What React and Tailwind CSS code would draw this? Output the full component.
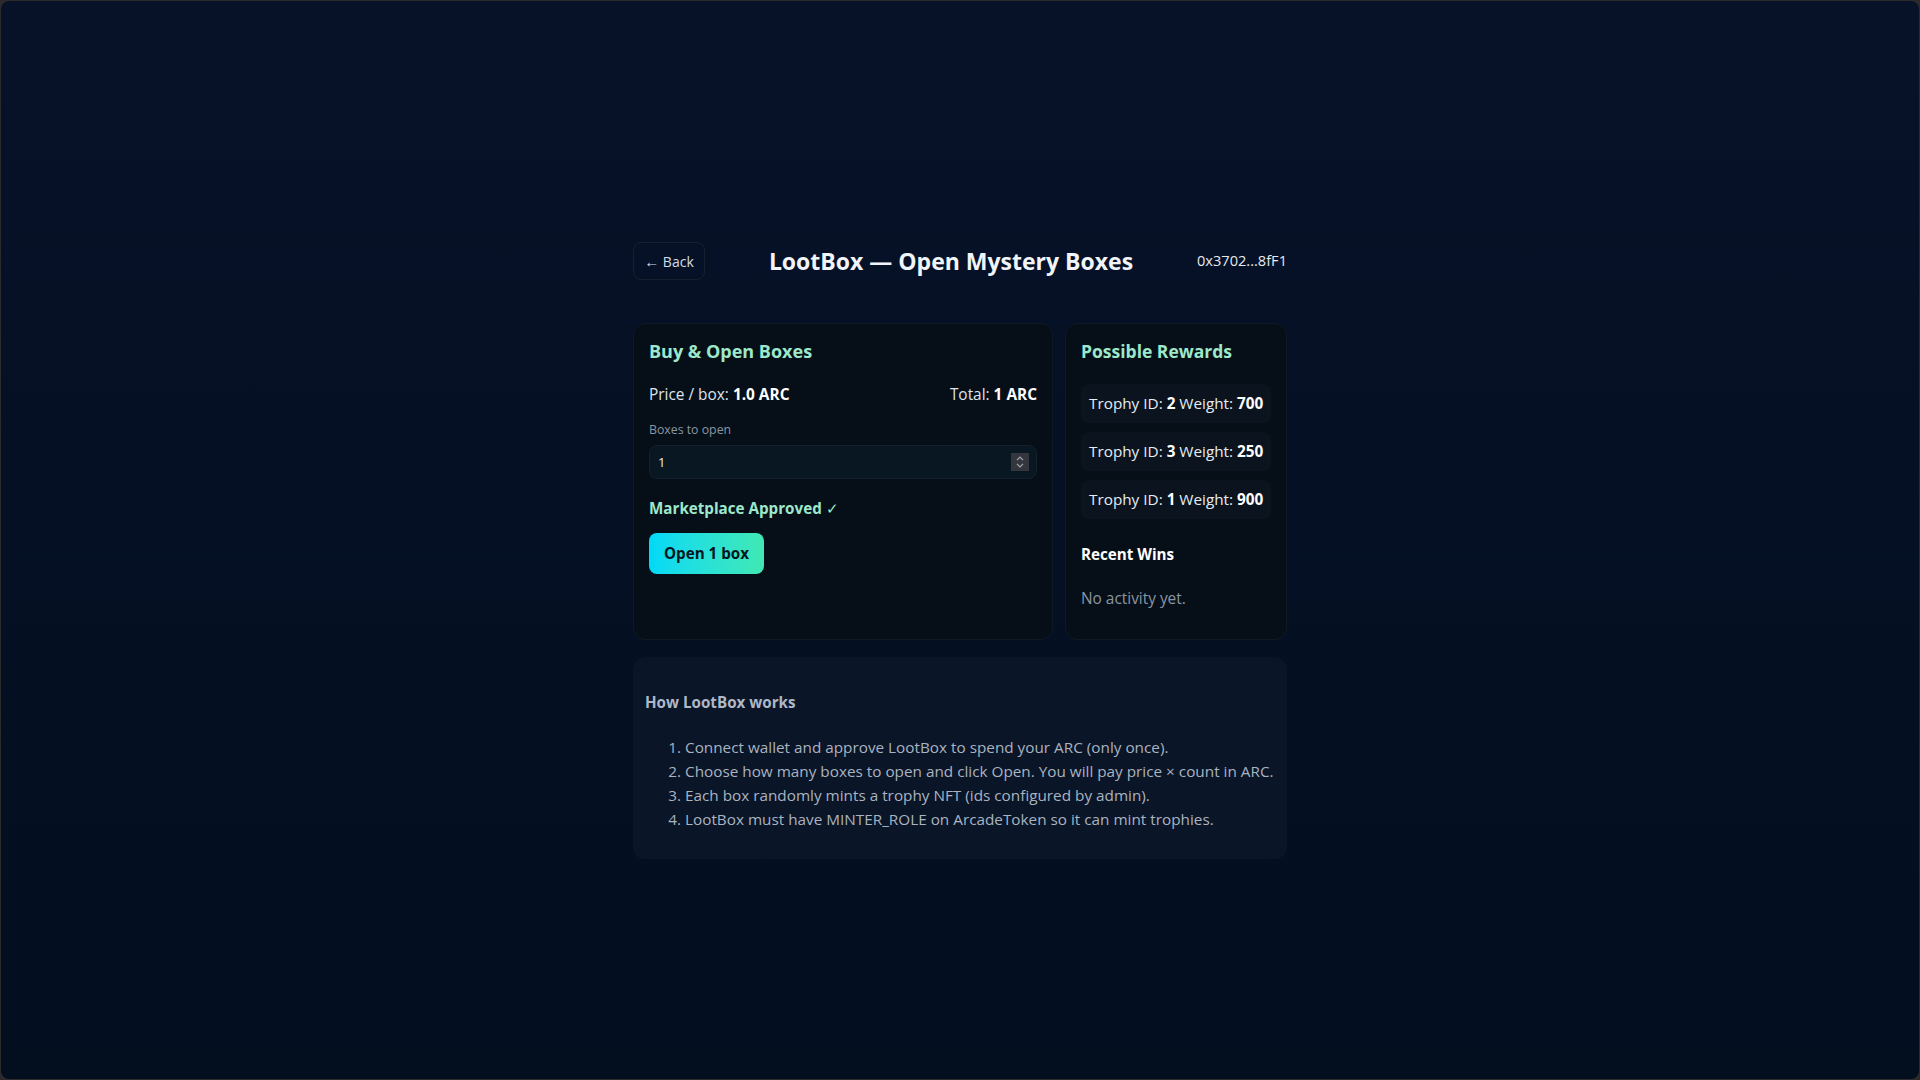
import { useState } from 'react';

const rewards = [
    { id: 2, weight: 700 },
    { id: 3, weight: 250 },
    { id: 1, weight: 900 },
];

const steps = [
    'Connect wallet and approve LootBox to spend your ARC (only once).',
    'Choose how many boxes to open and click Open. You will pay price × count in ARC.',
    'Each box randomly mints a trophy NFT (ids configured by admin).',
    'LootBox must have MINTER_ROLE on ArcadeToken so it can mint trophies.',
];

export default function App() {
    const [count, setCount] = useState(1);

    return (
        <div className="min-h-screen w-full bg-[#2b2b2b] p-px font-['Open_Sans',sans-serif]">
            <div className="h-[1078px] rounded-lg bg-gradient-to-b from-[#071229] to-[#030e1f]">
                <div className="w-[654px] mx-auto pt-[241px]">
                    {/* Header */}
                    <div className="flex items-center justify-between h-[38px]">
                        <button className="h-[38px] w-[72px] rounded-lg border border-[#16202e] text-[14px] text-[#d5dde6]">
                            <span className="text-[15px]">←</span> Back
                        </button>
                        <h1 className="text-[23px] font-bold text-[#f1f5f9]">LootBox — Open Mystery Boxes</h1>
                        <span className="text-[14.6px] text-[#e5e9ef]">0x3702...8fF1</span>
                    </div>

                    {/* Cards */}
                    <div className="grid grid-cols-[420px_222px] gap-3 mt-[43px]">
                        {/* Buy & Open */}
                        <div className="h-[317px] rounded-xl border border-[#0f1925] bg-[#060f18] p-[15px]">
                            <h2 className="text-[18px] leading-6 font-bold text-[#9de8cb]">Buy &amp; Open Boxes</h2>
                            <div className="mt-[21px] flex items-center justify-between text-[15.4px] leading-[22px] text-[#dde4ec]">
                                <span>Price / box: <b className="text-white">1.0 ARC</b></span>
                                <span>Total: <b className="text-white">{count} ARC</b></span>
                            </div>
                            <label className="block mt-4 text-[12.3px] leading-4 text-[#8b95a1]">Boxes to open</label>
                            <div className="relative mt-[7px]">
                                <input
                                    type="number"
                                    value={count}
                                    min={1}
                                    onChange={(e) => setCount(Number(e.target.value) || 1)}
                                    className="w-full h-[34px] rounded-lg border border-[#14202c] bg-[#091722] px-[8px] text-[13px] text-[#e8edf2] outline-none [appearance:textfield] [&::-webkit-inner-spin-button]:appearance-none [&::-webkit-outer-spin-button]:appearance-none"
                                />
                                <div className="absolute right-[8px] top-[8px] w-[18px] h-[18px] bg-[#34363d] flex flex-col items-center justify-center gap-[2px]">
                                    <svg width="8" height="5" viewBox="0 0 8 5" fill="none" stroke="#a3a7ae" strokeWidth="1.2">
                                        <path d="M1 4.2 L4 1.2 L7 4.2" />
                                    </svg>
                                    <svg width="8" height="5" viewBox="0 0 8 5" fill="none" stroke="#a3a7ae" strokeWidth="1.2">
                                        <path d="M1 0.8 L4 3.8 L7 0.8" />
                                    </svg>
                                </div>
                            </div>
                            <p className="mt-[18px] text-[15.2px] leading-[22px] font-bold text-[#9de8cb]">
                                Marketplace Approved <span className="font-normal">✓</span>
                            </p>
                            <button className="mt-[14px] h-[41px] w-[115px] rounded-lg bg-gradient-to-r from-[#00d9f7] to-[#40e8b3] text-[15.2px] font-bold text-[#04161f]">
                                Open {count} box
                            </button>
                        </div>

                        {/* Rewards */}
                        <div className="h-[317px] rounded-xl border border-[#0f1925] bg-[#060f18] p-[15px]">
                            <h2 className="text-[17.5px] leading-6 font-bold text-[#9de8cb]">Possible Rewards</h2>
                            <div className="mt-[21px] flex flex-col gap-[9px]">
                                {rewards.map((r) => (
                                    <div key={r.id} className="h-[39px] flex items-center rounded-lg bg-[#0b141e] px-[8px] text-[15.3px] text-[#e6ecf2] whitespace-nowrap">
                                        <span>Trophy ID: <b className="text-white">{r.id}</b> Weight: <b className="text-white">{r.weight}</b></span>
                                    </div>
                                ))}
                            </div>
                            <h3 className="mt-6 text-[15.2px] leading-[22px] font-bold text-white">Recent Wins</h3>
                            <p className="mt-[23px] text-[15.4px] leading-[22px] text-[#8a95a3]">No activity yet.</p>
                        </div>
                    </div>

                    {/* How it works */}
                    <div className="mt-[17px] h-[202px] rounded-xl bg-[#0a1527] px-3 pt-[34px]">
                        <h3 className="text-[15.2px] leading-[22px] font-bold text-[#aeb8c6]">How LootBox works</h3>
                        <ol className="mt-[22px] list-decimal pl-10 text-[15.3px] leading-6 text-[#a9b3c1]">
                            {steps.map((s) => (
                                <li key={s}>{s}</li>
                            ))}
                        </ol>
                    </div>
                </div>
            </div>
        </div>
    );
}
